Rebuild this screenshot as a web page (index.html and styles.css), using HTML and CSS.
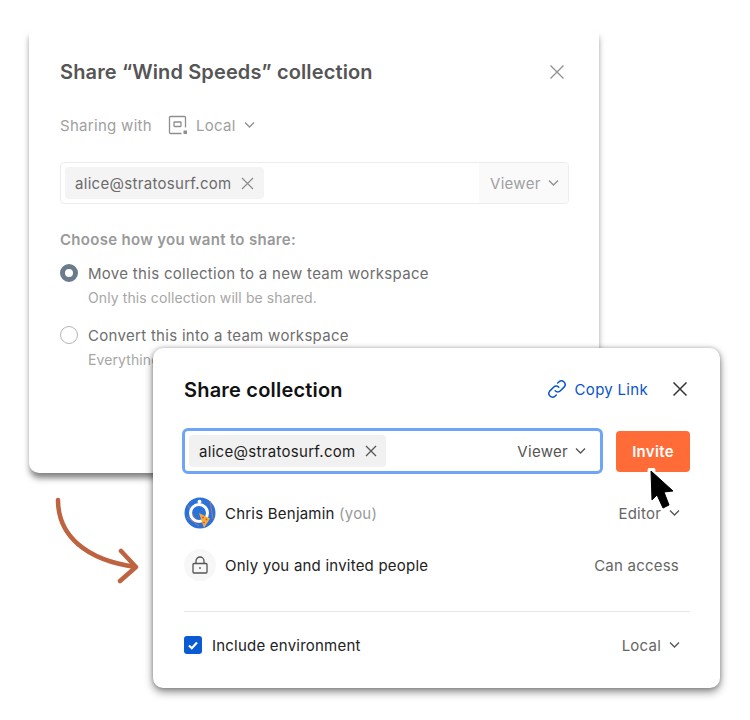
FILE: index.html
```html
<!DOCTYPE html>
<html lang="en">
<head>
<meta charset="utf-8">
<title>Share collection</title>
<link rel="stylesheet" href="styles.css">
</head>
<body>
<main class="stage">
  <section class="card back">
    <header class="back-head">
      <h2 class="back-title">Share “Wind Speeds” collection</h2>
      <svg class="ico back-close" width="14" height="14" viewBox="0 0 14 14"><path d="M.5 .5l13 13M13.500 .5l-13 13"/></svg>
    </header>
    <div class="sharing">
      <span>Sharing with</span>
      <svg class="ico env" width="20" height="20" viewBox="0 0 20 20"><path d="M17.500 12.500V2.500a1 1 0 0 0-1-1H2.500a1 1 0 0 0-1 1v15a1 1 0 0 0 1 1h11"/><rect x="6" y="7" width="7" height="4.500" rx=".5"/><rect class="fill" x="15.500" y="15.500" width="3.500" height="3.500"/></svg>
      <span>Local</span>
      <svg class="ico chev" width="11" height="8" viewBox="0 0 11 8"><path d="M1 1.500l4.500 4.500 4.500-4.500"/></svg>
    </div>
    <div class="back-input">
      <span class="chip back-chip">alice@stratosurf.com
        <svg class="ico x" width="13" height="13" viewBox="0 0 13 13"><path d="M1 1l11 11M12 1L1 12"/></svg>
      </span>
      <span class="back-role">Viewer
        <svg class="ico chev" width="11" height="8" viewBox="0 0 11 8"><path d="M1 1.500l4.500 4.500 4.500-4.500"/></svg>
      </span>
    </div>
    <h3 class="choose">Choose how you want to share:</h3>
    <div class="option">
      <span class="radio on"></span>
      <div>
        <div class="opt-title">Move this collection to a new team workspace</div>
        <div class="opt-sub">Only this collection will be shared.</div>
      </div>
    </div>
    <div class="option second">
      <span class="radio"></span>
      <div>
        <div class="opt-title">Convert this into a team workspace</div>
        <div class="opt-sub">Everything in this workspace will be shared.</div>
      </div>
    </div>
  </section>

  <svg class="arrow" width="90" height="100" viewBox="0 0 90 100"><path d="M9 8C9 43 36 68 87 75M72 59l15 16L71 89"/></svg>

  <section class="card front">
    <header class="front-head">
      <h2 class="front-title">Share collection</h2>
      <a class="copy">
        <svg class="link" width="20" height="20" viewBox="0 0 20 20"><path d="M8.200 11.800a3.600 3.600 0 0 0 5.200 0l3.900-3.900a3.700 3.700 0 0 0-5.200-5.200L10.700 4M11.800 8.200a3.600 3.600 0 0 0-5.200 0l-3.900 3.900a3.700 3.700 0 0 0 5.200 5.200L9.300 16"/></svg>
        Copy Link
      </a>
      <svg class="ico front-close" width="14" height="14" viewBox="0 0 14 14"><path d="M.5 .5l13 13M13.500 .5l-13 13"/></svg>
    </header>
    <div class="invite-row">
      <div class="front-input">
        <span class="chip front-chip">alice@stratosurf.com
          <svg class="ico x dark" width="12" height="12" viewBox="0 0 12 12"><path d="M1 1l10 10M11 1L1 11"/></svg>
        </span>
        <span class="front-role">Viewer
          <svg class="ico chev dark" width="11" height="8" viewBox="0 0 11 8"><path d="M1 1.500l4.500 4.500 4.500-4.500"/></svg>
        </span>
      </div>
      <button class="invite">Invite</button>
    </div>
    <div class="person first">
      <svg class="avatar" width="32" height="32" viewBox="0 0 32 32">
        <circle cx="16" cy="16" r="15.500" fill="#2a71d8"/>
        <path d="M4 8l9 18M26 4l3 18M3 20l12 9" stroke="#e87a5a" stroke-width=".7" fill="none"/>
        <circle cx="15" cy="16" r="8.500" fill="none" stroke="#fff" stroke-width="3"/>
        <circle cx="15.500" cy="4.700" r="2" fill="#fff"/>
        <path d="M15 16L26 21.500 20 31z" fill="#f7ad3a"/>
        <circle cx="19" cy="20.500" r="1.100" fill="#e5533c"/><circle cx="22.500" cy="22.500" r=".9" fill="#e5533c"/><circle cx="20" cy="25.500" r=".9" fill="#e5533c"/>
      </svg>
      <span class="name">Chris Benjamin <span class="you">(you)</span></span>
      <span class="right">Editor
        <svg class="ico chev dark" width="11" height="8" viewBox="0 0 11 8"><path d="M1 1.500l4.500 4.500 4.500-4.500"/></svg>
      </span>
    </div>
    <div class="person access">
      <span class="lock-wrap">
        <svg class="ico dark" width="16" height="18" viewBox="0 0 16 18"><rect x="1" y="7.500" width="14" height="9.500" rx="1"/><path d="M4 7.500V5a4 4 0 0 1 8 0v2.500M8 11v2"/></svg>
      </span>
      <span class="name">Only you and invited people</span>
      <span class="right can">Can access</span>
    </div>
    <hr class="rule">
    <div class="person env-row">
      <span class="check">
        <svg width="14" height="14" viewBox="0 0 14 14"><path d="M3 7.500l2.800 2.700L11 4.500"/></svg>
      </span>
      <span class="name include">Include environment</span>
      <span class="right">Local
        <svg class="ico chev dark" width="11" height="8" viewBox="0 0 11 8"><path d="M1 1.500l4.500 4.500 4.500-4.500"/></svg>
      </span>
    </div>
  </section>

  <svg class="cursor" width="30" height="44" viewBox="0 0 30 44"><circle cx="4.500" cy="3" r="4" fill="#fff"/><path d="M4 3L26 23l-9 1 5 13-6 3-6-13-5 5z" fill="#000" stroke="#000" stroke-linejoin="round"/></svg>
</main>
</body>
</html>
```

FILE: styles.css
```css
* { box-sizing: border-box; }
html, body { margin: 0; padding: 0; background: #fff; }
body { font-family: Inter, "Liberation Sans", sans-serif; font-size: 15px; letter-spacing: .3px; }
.stage { position: relative; width: 750px; height: 720px; overflow: hidden; }
h2, h3 { margin: 0; }

.ico { fill: none; stroke: #8f8f8f; stroke-width: 1.300; flex: none; }
.ico .fill { fill: #8f8f8f; stroke: none; }
.ico.dark { stroke: #555; }

.card { position: absolute; background: #fff; }
.back {
  left: 29px; top: 30px; width: 570px; height: 443px;
  border-radius: 0 0 10px 10px;
  padding: 30px 31px 0;
  box-shadow: 0 6px 6px -1px rgba(0,0,0,.5);
}
.back-head { display: flex; justify-content: space-between; align-items: center; height: 24px; }
.back-title { font-size: 20px; font-weight: 600; color: #555; line-height: 24px; letter-spacing: .13px; }
.back-close { margin-right: 4px; }
.sharing { display: flex; align-items: center; margin-top: 29px; height: 24px; color: #a0a0a0; }
.env { margin-left: 16px; margin-right: 8px; }
.sharing .chev { margin-left: 8px; }

.back-input {
  display: flex; align-items: stretch; justify-content: space-between;
  margin-top: 25px; width: 509px; height: 42px;
  border: 1px solid #ececec; border-radius: 4px;
  padding: 4px 0 4px 4px;
}
.chip { display: flex; align-items: center; border-radius: 4px; }
.back-chip { width: 199px; padding-left: 10px; gap: 9px; background: #f4f4f4; color: #6b6b6b; }
.back-role { display: flex; align-items: center; gap: 7px; width: 89px; margin: -4px 0; padding-left: 11px; background: #fafafa; border-radius: 0 4px 4px 0; color: #a0a0a0; }

.choose { margin-top: 26px; font-size: 15px; font-weight: 600; line-height: 20px; color: #999; letter-spacing: .3px; }
.option { display: flex; gap: 10px; margin-top: 13px; }
.second { margin-top: 17px; }
.radio { flex: none; width: 18px; height: 18px; margin-top: 1px; border-radius: 50%; border: 1px solid #b5b5b5; background: #fff; }
.radio.on { border: 5.500px solid #6c7b8c; }
.opt-title { line-height: 22px; color: #6e6e6e; }
.opt-sub { font-size: 14px; line-height: 20px; margin-top: 3px; color: #a6a6a6; letter-spacing: .1px; }

.arrow { position: absolute; left: 49px; top: 492px; fill: none; stroke: #bf6240; stroke-width: 4.500; stroke-linecap: round; stroke-linejoin: round; overflow: visible; }

.front {
  left: 153px; top: 348px; width: 567px; height: 340px;
  border-radius: 10px;
  padding: 30px 30px 0 31px;
  box-shadow: 0 4px 8px rgba(0,0,0,.45), 0 0 4px rgba(0,0,0,.25);
}
.front-head { display: flex; align-items: center; height: 24px; }
.front-title { flex: 1; font-size: 20px; font-weight: 600; color: #111; line-height: 24px; letter-spacing: .2px; }
.copy { display: flex; align-items: center; gap: 8px; margin-bottom: 2px; color: #0a55c8; }
.link { fill: none; stroke: #0a55c8; stroke-width: 1.500; stroke-linecap: round; }
.front-close { margin-left: 25px; margin-right: 3px; margin-bottom: 2px; stroke-width: 1.500; stroke: #333; }

.invite-row { display: flex; align-items: center; justify-content: space-between; margin-top: 26px; margin-left: -2px; }
.front-input {
  display: flex; align-items: stretch; justify-content: space-between;
  width: 421px; height: 46px; padding: 4px 14px 4px 4px;
  border: 3px solid #6ea6f5; border-radius: 6px;
}
.front-chip { width: 197px; padding-left: 10px; gap: 9px; background: #f1f1f1; color: #1c1c1c; }
.front-role { display: flex; align-items: center; gap: 7px; color: #555; }
.invite { width: 74px; height: 41px; border: 0; border-radius: 4px; background: #ff6c37; color: #fff; font: 600 15px Inter, sans-serif; letter-spacing: .3px; }

.person { display: flex; align-items: center; height: 32px; margin-top: 24px; letter-spacing: .22px; }
.first { margin-top: 23px; }
.avatar { flex: none; }
.name { flex: 1; margin-left: 9px; color: #222; }
.you { color: #999; }
.right { display: flex; align-items: center; gap: 8px; margin-right: 10px; color: #666; }
.can { margin-right: 11px; }
.access { margin-top: 20px; }
.lock-wrap { flex: none; display: flex; align-items: center; justify-content: center; width: 32px; height: 32px; border-radius: 50%; background: #f7f7f7; }
.rule { margin: 30px 0 0; border: 0; border-top: 1px solid #e6e6e6; }
.env-row { margin-top: 17px; }
.check { flex: none; display: flex; align-items: center; justify-content: center; width: 18px; height: 18px; border-radius: 3px; background: #0a5bd3; }
.check svg { fill: none; stroke: #fff; stroke-width: 2.200; }
.include { margin-left: 10px; }
.cursor { position: absolute; left: 647px; top: 468px; }
```
